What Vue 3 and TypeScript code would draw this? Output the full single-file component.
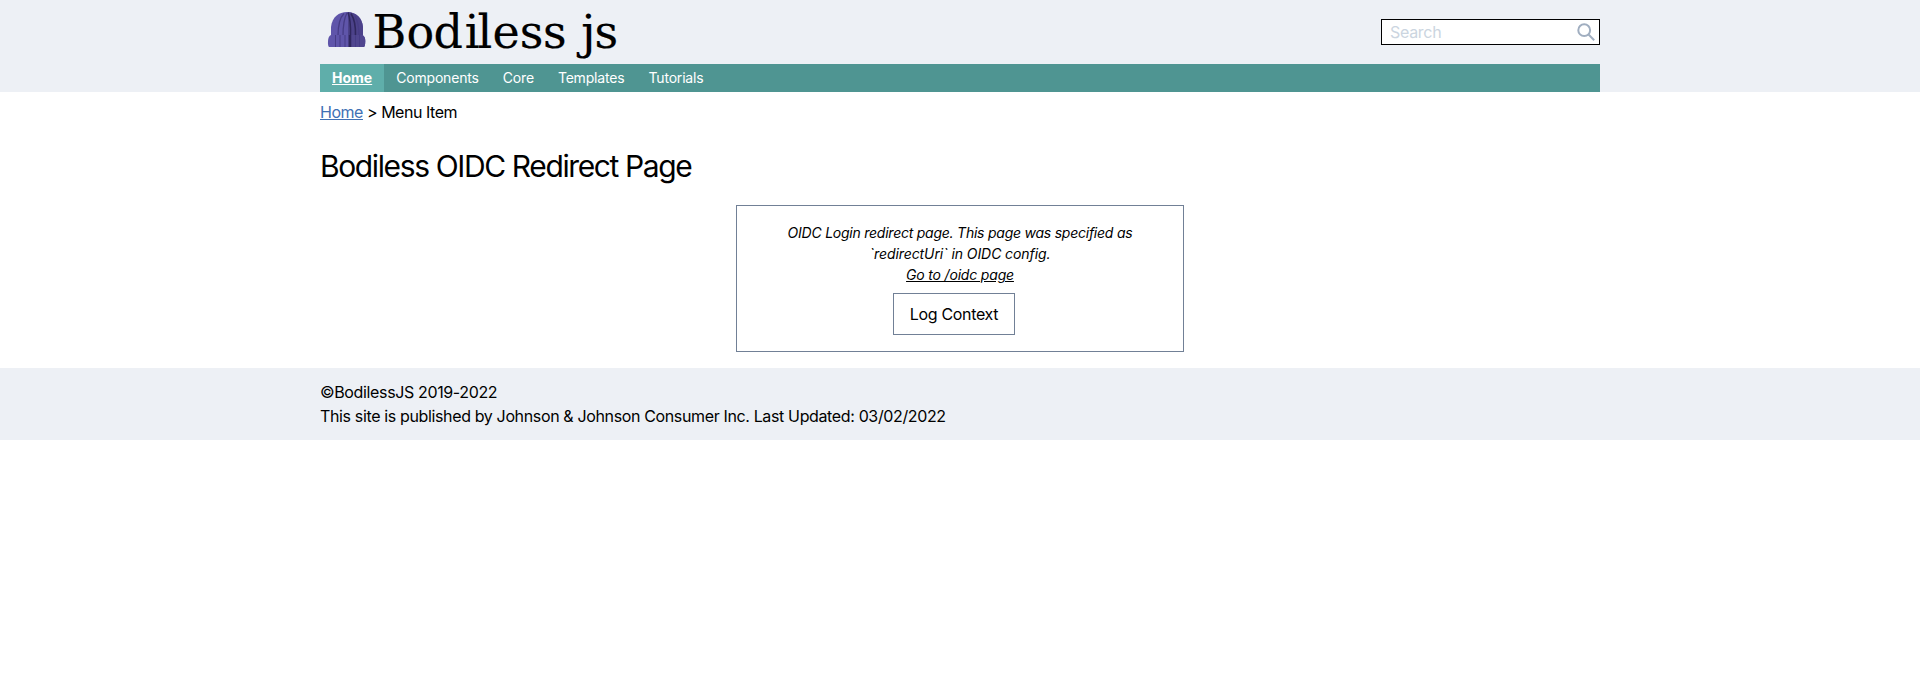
<script setup lang="ts">
const navItems: { label: string; active?: boolean }[] = [
  { label: 'Home', active: true },
  { label: 'Components' },
  { label: 'Core' },
  { label: 'Templates' },
  { label: 'Tutorials' },
]
</script>

<template>
  <header class="header">
    <div class="container">
      <div class="brand-row">
        <svg class="logo" width="312" height="64" viewBox="0 0 312 64" role="img" aria-label="Bodiless js">
          <path d="M11 36V27C12 17 19 12 27 12s15 5 16 15v9z" fill="#5f55aa" />
          <path d="M28 12c9 1 14 6 15 15v9H28z" fill="#4c428a" />
          <path d="M24 13.500q-6 6-6 22.500M27 13q-4 7-4 23M35 16q4 7 4 20" fill="none" stroke="#463c86" stroke-width="1.300" />
          <path d="M28 12.500q3 8 2.500 23.500M31 13.500q5 8 4.500 22.500" fill="none" stroke="#2f275e" stroke-width="1.500" />
          <path d="M11 35H42Q45.300 36 45.300 41T44 47H9Q7.700 46 8 41T11 35" fill="#5f55aa" />
          <path d="M28 35H42Q45.300 36 45.300 41T44 47H28z" fill="#50468f" />
          <path d="M15.500 35v12M20 35v12M25 35v12M35.500 35v12M39.500 35v12" stroke="#463c86" />
          <path d="M30 35v12" stroke="#2f275e" stroke-width="2.500" />
          <text class="wordmark" y="48" x="52.4 86.6 113.4 144.7 157.500 172.600 199.800 223 253 261.300 274.600">Bodiless js</text>
        </svg>
        <div class="search">
          <input type="text" placeholder="Search" aria-label="Search" />
          <svg class="glass" width="18" height="18" viewBox="0 0 18 18"><circle cx="7.200" cy="7.200" r="5.900" /><path d="M11.300 11.300l5.900 5.900" /></svg>
        </div>
      </div>
      <nav class="nav">
        <a v-for="item in navItems" :key="item.label" class="nav-item" :class="{ active: item.active }">{{ item.label }}</a>
      </nav>
    </div>
  </header>
  <main class="container">
    <div class="breadcrumb"><a>Home</a> &gt; Menu Item</div>
    <h1>Bodiless OIDC Redirect Page</h1>
    <section class="card">
      <p>OIDC Login redirect page. This page was specified as<br /><span class="uri">`redirectUri` in OIDC config.</span></p>
      <a class="oidc">Go to /oidc page</a>
      <button type="button">Log Context</button>
    </section>
  </main>
  <footer class="footer">
    <div class="container">©BodilessJS 2019-2022<br />This site is published by Johnson &amp; Johnson Consumer Inc. Last Updated: 03/02/2022</div>
  </footer>
</template>

<style>
body { font-family: Inter, "Liberation Sans", sans-serif; font-size: 16px; line-height: 24px; color: #000; background: #fff; }
</style>
<style scoped>
.container { width: 1280px; margin: 0 auto; }
.header { height: 92px; background: #edf0f5; }
.brand-row { display: flex; justify-content: space-between; align-items: center; height: 64px; }
.logo { display: block; }
.wordmark { font-family: "DejaVu Serif", serif; font-size: 46px; fill: #000; stroke: #000; stroke-width: 0.2; }
.search { display: flex; align-items: center; box-sizing: border-box; width: 219px; height: 26px; border: 1px solid #000; background: #fff; padding: 0 4px 0 8px; }
input { flex: 1; min-width: 0; padding: 0; border: 0; outline: 0; background: transparent; font: inherit; letter-spacing: -0.3px; }
input::placeholder { color: #cbd5e0; opacity: 1; }
.glass { fill: none; stroke: #a0aec0; stroke-width: 2; }
.nav { display: flex; height: 28px; background: #4f9592; color: #fff; font-size: 14px; line-height: 28px; letter-spacing: -0.18px; }
.nav-item { padding: 0 12px; }
.active { background: #5faeaa; font-weight: 700; text-decoration: underline; letter-spacing: 0; }
.breadcrumb { padding-top: 8px; height: 24px; letter-spacing: -0.47px; }
.breadcrumb a { color: #4070b4; text-decoration: underline; }
h1 { margin: 24px 0 20px; height: 37px; line-height: 37px; font-size: 30px; font-weight: 400; letter-spacing: -1.38px; }
.card { display: flex; flex-direction: column; align-items: center; box-sizing: border-box; width: 448px; height: 147px; margin: 0 auto 16px; padding-top: 16px; border: 1px solid #718096; font-size: 14px; line-height: 21px; letter-spacing: -0.24px; }
p { margin: 0; text-align: center; font-style: italic; }
.uri { letter-spacing: -0.08px; }
.oidc { font-style: italic; text-decoration: underline; letter-spacing: -0.18px; }
button { box-sizing: border-box; width: 122px; height: 42px; margin: 8px 12px 0 0; padding: 0; border: 1px solid #718096; background: #fff; color: #000; font: inherit; font-size: 16px; letter-spacing: -0.33px; }
.footer { box-sizing: border-box; height: 72px; padding-top: 12px; background: #edf0f5; letter-spacing: -0.36px; }
</style>
